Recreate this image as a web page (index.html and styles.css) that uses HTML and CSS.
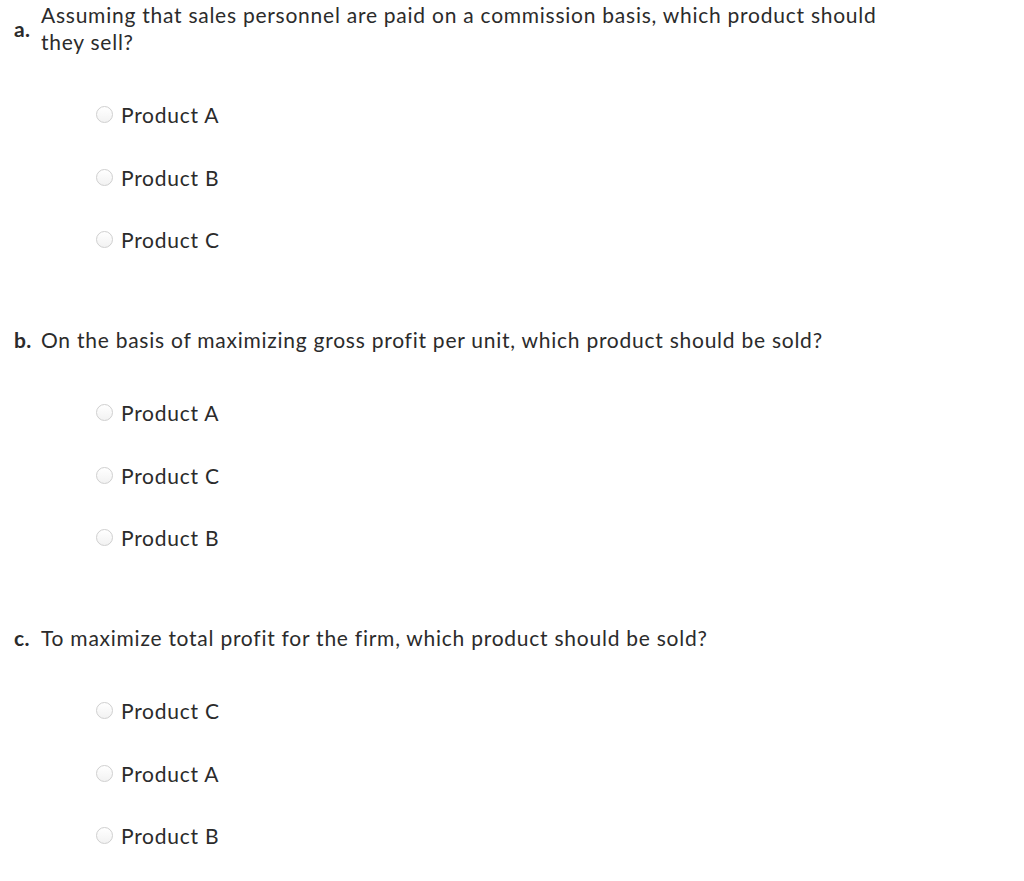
FILE: index.html
```html
<!DOCTYPE html>
<html>
<head>
<meta charset="utf-8">
<link rel="stylesheet" href="styles.css">
</head>
<body>
<div class="page">
  <section class="question">
    <div class="prompt">
      <span class="label">a.</span>
      <span class="text">Assuming that sales personnel are paid on a commission basis, which product should they sell?</span>
    </div>
    <ul class="options">
      <li class="option"><span class="radio"></span><span>Product A</span></li>
      <li class="option"><span class="radio"></span><span>Product B</span></li>
      <li class="option"><span class="radio"></span><span>Product C</span></li>
    </ul>
  </section>
  <section class="question">
    <div class="prompt">
      <span class="label">b.</span>
      <span class="text">On the basis of maximizing gross profit per unit, which product should be sold?</span>
    </div>
    <ul class="options">
      <li class="option"><span class="radio"></span><span>Product A</span></li>
      <li class="option"><span class="radio"></span><span>Product C</span></li>
      <li class="option"><span class="radio"></span><span>Product B</span></li>
    </ul>
  </section>
  <section class="question">
    <div class="prompt">
      <span class="label">c.</span>
      <span class="text">To maximize total profit for the firm, which product should be sold?</span>
    </div>
    <ul class="options">
      <li class="option"><span class="radio"></span><span>Product C</span></li>
      <li class="option"><span class="radio"></span><span>Product A</span></li>
      <li class="option"><span class="radio"></span><span>Product B</span></li>
    </ul>
  </section>
</div>
</body>
</html>
```
FILE: styles.css
```css
html, body {
  margin: 0;
  padding: 0;
  background: #ffffff;
}
body {
  font-family: "Lato", "Open Sans", sans-serif;
  font-size: 21px;
  letter-spacing: 0.75px;
  color: #2b2b2b;
  font-variant-ligatures: none;
}
.page {
  padding: 1px 0 0 14px;
}
.question {
  margin-bottom: 55.25px;
}
.prompt {
  display: flex;
  align-items: center;
  line-height: 27px;
}
.label {
  flex: 0 0 27px;
  font-weight: 700;
  letter-spacing: 0.3px;
}
.text {
  flex: 0 1 auto;
  max-width: 880px;
}
.options {
  list-style: none;
  margin: 28.25px 0 0 0;
  padding: 0 0 0 82px;
}
.option {
  display: flex;
  align-items: center;
  height: 62.5px;
  gap: 8px;
}
.radio {
  width: 15px;
  height: 15px;
  border-radius: 50%;
  border: 1px solid #cfcfcf;
  background: linear-gradient(#ffffff, #f2f2f2);
  box-sizing: content-box;
}
```
